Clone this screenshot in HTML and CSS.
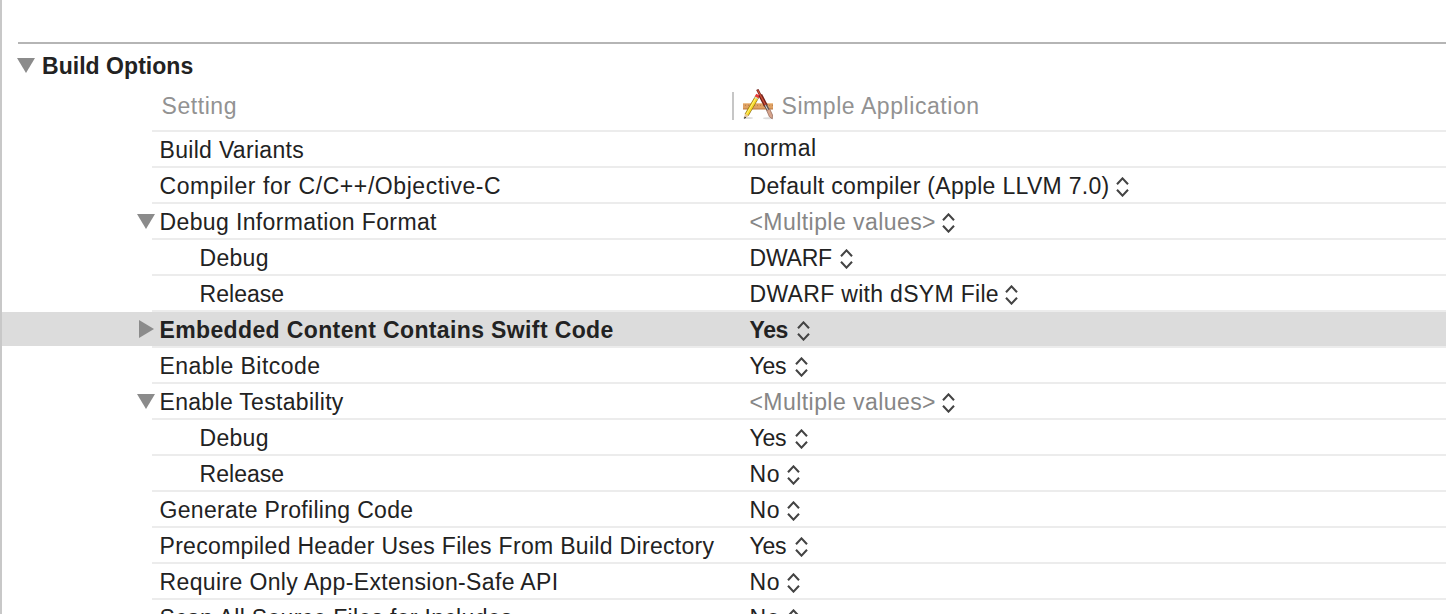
FILE: index.html
```
<!DOCTYPE html>
<html lang="en">
<head>
<meta charset="utf-8">
<title>Build Options</title>
<link rel="stylesheet" href="styles.css">
</head>
<body>
<svg width="0" height="0" class="defs">
  <symbol id="updown" viewBox="0 0 13 20"><path d="M1 7.2 6.5 1.4 12 7.2M1 12.8 6.5 18.6 12 12.8" fill="none" stroke="#444" stroke-width="2.1"/></symbol>
  <symbol id="down" viewBox="0 0 18 15"><path d="M0 0H18L9 15Z" fill="#8b8b8b"/></symbol>
  <symbol id="right" viewBox="0 0 15 18"><path d="M0 0V18L15 9Z" fill="#8b8b8b"/></symbol>
</svg>
<main class="panel">
  <section class="section">
    <h1 class="title"><svg class="tri"><use href="#down"/></svg><span class="t3">Build Options</span></h1>
    <div class="head">
      <div class="name t8">Setting</div>
      <div class="value">
        <span class="divider"></span>
        <svg class="app" viewBox="0 0 31 31">
          <ellipse cx="5" cy="29" rx="5" ry="1" fill="#ddd"/>
          <ellipse cx="25" cy="29.3" rx="5" ry="1" fill="#ddd"/>
          <path d="M0 14H30V20H0Z" fill="#dfa164"/>
          <path d="M0 14.5H30" stroke="#efc391"/>
          <path d="M0 20H30" stroke="#b8773f"/>
          <path d="M2 16.3H30" stroke="#bd844e" stroke-width="1.3" stroke-dasharray="1 2"/>
          <path d="M14.3 7.5 3.6 26" stroke="#8b6d13" stroke-width="4.4"/>
          <path d="M14.3 7.5 3.6 26" stroke="#f8d928" stroke-width="3.1"/>
          <path d="M13.7 7.5 3.3 25.4" stroke="#fff27a" stroke-width="1"/>
          <path d="M1.8 24.5 5.7 26.8 1.3 30Z" fill="#e8c79b"/>
          <path d="M1.5 27.6 3.2 28.5 1.2 30Z" fill="#222"/>
          <path d="M15.2 5.8 13.8 8.3" stroke="#e93a3e" stroke-width="4.4"/>
          <path d="M13.5 8.7 13 9.5" stroke="#c7ccd2" stroke-width="4.2"/>
          <path d="M14.3.5 19 9.5" stroke="#70211a" stroke-width="2.5"/>
          <path d="M17.3 6 23 17" stroke="#74211b" stroke-width="4"/>
          <path d="M14.7 1.3 22.7 16.5" stroke="#d2533b" stroke-width="1.3"/>
          <path d="M22.5 16 25.3 21.5" stroke="#5c5554" stroke-width="3.2"/>
          <path d="M22.4 16.3 25 21.3" stroke="#ddd" stroke-width="1"/>
          <path d="M23.7 21.5 26.7 20 29.5 26 29.3 29.8 26.4 27.8Z" fill="#d7a58d" stroke="#8e6251" stroke-width=".7"/>
        </svg>
        <span class="t8">Simple Application</span>
      </div>
    </div>
  </section>

  <div class="row"><div class="gutter"></div><div class="name t5">Build Variants</div><div class="value plain t7">normal</div></div>
  <div class="row"><div class="gutter"></div><div class="name t8">Compiler for C/C++/Objective-C</div><div class="value"><span class="t5">Default compiler (Apple LLVM 7.0)</span><svg class="step"><use href="#updown"/></svg></div></div>
  <div class="row"><div class="gutter"><svg class="tri"><use href="#down"/></svg></div><div class="name t6">Debug Information Format</div><div class="value dim"><span class="t7">&lt;Multiple values&gt;</span><svg class="step"><use href="#updown"/></svg></div></div>
  <div class="row"><div class="gutter"></div><div class="name sub t5">Debug</div><div class="value short"><span class="t0">DWARF</span><svg class="step"><use href="#updown"/></svg></div></div>
  <div class="row"><div class="gutter"></div><div class="name sub t3">Release</div><div class="value"><span class="t5">DWARF with dSYM File</span><svg class="step"><use href="#updown"/></svg></div></div>
  <div class="row selected"><div class="gutter"><svg class="tri-right"><use href="#right"/></svg></div><div class="name t6">Embedded Content Contains Swift Code</div><div class="value short"><span class="tight">Yes</span><svg class="step"><use href="#updown"/></svg></div></div>
  <div class="row"><div class="gutter"></div><div class="name t7">Enable Bitcode</div><div class="value short"><span class="t0">Yes</span><svg class="step"><use href="#updown"/></svg></div></div>
  <div class="row"><div class="gutter"><svg class="tri"><use href="#down"/></svg></div><div class="name t5">Enable Testability</div><div class="value dim"><span class="t7">&lt;Multiple values&gt;</span><svg class="step"><use href="#updown"/></svg></div></div>
  <div class="row"><div class="gutter"></div><div class="name sub t5">Debug</div><div class="value short"><span class="t0">Yes</span><svg class="step"><use href="#updown"/></svg></div></div>
  <div class="row"><div class="gutter"></div><div class="name sub t3">Release</div><div class="value"><span class="t8">No</span><svg class="step"><use href="#updown"/></svg></div></div>
  <div class="row"><div class="gutter"></div><div class="name t5">Generate Profiling Code</div><div class="value"><span class="t8">No</span><svg class="step"><use href="#updown"/></svg></div></div>
  <div class="row"><div class="gutter"></div><div class="name t5">Precompiled Header Uses Files From Build Directory</div><div class="value short"><span class="t0">Yes</span><svg class="step"><use href="#updown"/></svg></div></div>
  <div class="row"><div class="gutter"></div><div class="name t6">Require Only App-Extension-Safe API</div><div class="value"><span class="t8">No</span><svg class="step"><use href="#updown"/></svg></div></div>
  <div class="row"><div class="gutter"></div><div class="name t5">Scan All Source Files for Includes</div><div class="value"><span class="t8">No</span><svg class="step"><use href="#updown"/></svg></div></div>
</main>
</body>
</html>
```
FILE: styles.css
```
* { box-sizing: border-box; }
html, body { margin: 0; height: 100%; overflow: hidden; background: #fff; }
.defs { display: none; }
svg { flex: none; display: block; }

.panel {
  height: 614px;
  overflow: hidden;
  border-left: 2px solid #c8c8c8;
  padding-top: 42px;
  font: 23px/36px "Liberation Sans", Arial, sans-serif;
  color: #222;
  white-space: nowrap;
}

.section { margin-left: 16px; border-top: 2px solid #b5b5b5; padding-top: 4px; height: 90px; }
.title { margin: 0; font: inherit; font-weight: bold; height: 36px; display: flex; gap: 7px; }
.title .tri { margin: 10px 0 0 -1px; }
.head { display: flex; margin: 4px 0 0 134px; height: 44px; border-bottom: 2px solid #ececec; color: #929292; }
.head .name { padding-left: 9.5px; }
.head .name, .head .value { height: 42px; border: 0; }
.head .value { padding-left: 0; }
.divider { width: 2px; height: 28px; margin: 4px 8px 0 -8px; background: #c6c6c6; }
.app { width: 31px; height: 31px; margin: 1px 7.5px 0 1px; }

.row { display: grid; grid-template-columns: 150px 588px 1fr; height: 36px; }
.gutter { height: 34px; display: flex; justify-content: flex-end; }
.tri { width: 18px; height: 15px; margin: 10px -3px 0 0; }
.tri-right { width: 15px; height: 18px; margin: 8px -2px 0 0; }
.name { width: 588px; height: 36px; padding-left: 7.5px; border-bottom: 2px solid #ececec; }
.sub { padding-left: 47.5px; }
.value { height: 36px; padding-left: 9.5px; border-bottom: 2px solid #ececec; display: flex; }
.plain { padding-left: 3.5px; line-height: 32px; }
.step { width: 13px; height: 20px; margin: 9px 0 0 6.5px; }
.short .step { margin-left: 8.5px; }
.dim { color: #868686; }
.selected { font-weight: bold; background: linear-gradient(#dcdcdc 34px, #fff 34px); }

/* letter-spacing steps */
.tight { letter-spacing: -.38px; }
.t0 { letter-spacing: -.2px; }
.t3 { letter-spacing: .04px; }
.t5 { letter-spacing: .31px; }
.t6 { letter-spacing: .37px; }
.t7 { letter-spacing: .44px; }
.t8 { letter-spacing: .57px; }
```
